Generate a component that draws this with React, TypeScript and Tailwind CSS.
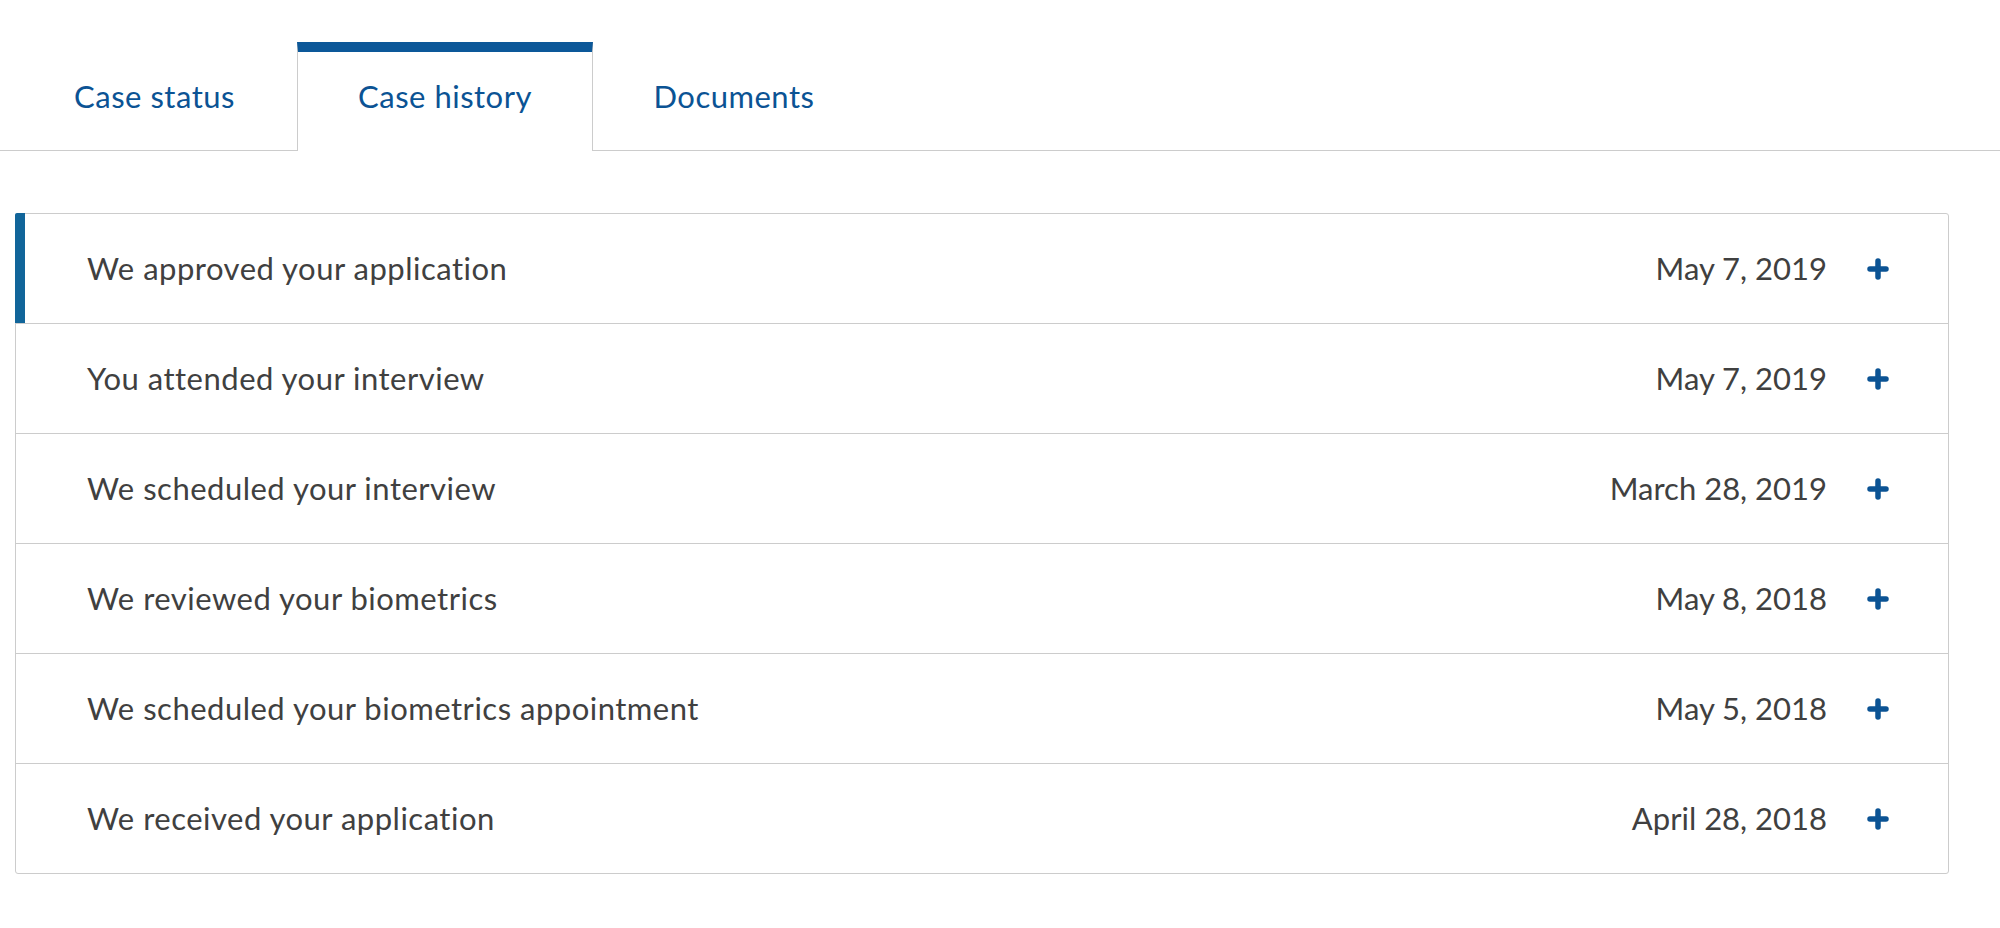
import { Fragment } from 'react'

const tabs = [
  { label: 'Case status', width: 'w-[285px]', active: false },
  { label: 'Case history', width: 'w-[296px]', active: true },
  { label: 'Documents', width: 'w-[282px]', active: false },
]

const events = [
  { title: 'We approved your application', date: 'May 7, 2019' },
  { title: 'You attended your interview', date: 'May 7, 2019' },
  { title: 'We scheduled your interview', date: 'March 28, 2019' },
  { title: 'We reviewed your biometrics', date: 'May 8, 2018' },
  { title: 'We scheduled your biometrics appointment', date: 'May 5, 2018' },
  { title: 'We received your application', date: 'April 28, 2018' },
]

function PlusIcon() {
  return (
    <svg width="22" height="22" viewBox="0 0 22 22" fill="none">
      <path d="M11 3V19M3 11H19" stroke="#0b5394" strokeWidth="5.5" strokeLinecap="round" />
    </svg>
  )
}

export default function App() {
  return (
    <div className="min-h-screen w-full bg-white font-['Lato',sans-serif]">
      {/* Tabs */}
      <div className="pt-[42px] border-b border-[#cccccc]">
        <div className="flex pl-[12px]">
          {tabs.map((tab) => (
            <button
              key={tab.label}
              className={
                tab.active
                  ? `${tab.width} h-[109px] -mb-px pb-[11px] flex items-center justify-center bg-white border-x border-[#cccccc] border-t-[10px] border-t-[#0c5899] text-[31px] tracking-[0.5px] text-[#0b5394]`
                  : `${tab.width} h-[108px] flex items-center justify-center text-[31px] tracking-[0.5px] text-[#0b5394]`
              }
            >
              {tab.label}
            </button>
          ))}
        </div>
      </div>

      {/* History list */}
      <div className="mt-[62px] ml-[15px] w-[1934px] border border-[#cccccc] rounded-[3px] text-[31px] text-[#404040]">
        {events.map((ev, i) => (
          <Fragment key={ev.title}>
            <div
              className={`relative flex items-center h-[109px] pl-[71px] pr-[59px] ${
                i < events.length - 1 ? 'border-b border-[#cccccc] h-[110px]' : ''
              }`}
            >
              {i === 0 && (
                <span className="absolute left-[-1px] top-[-1px] bottom-0 w-[10px] bg-[#11659a] rounded-tl-[2px]" />
              )}
              <span className="flex-1 tracking-[0.5px]">{ev.title}</span>
              <span>{ev.date}</span>
              <span className="ml-[40px] flex items-center">
                <PlusIcon />
              </span>
            </div>
          </Fragment>
        ))}
      </div>
    </div>
  )
}
